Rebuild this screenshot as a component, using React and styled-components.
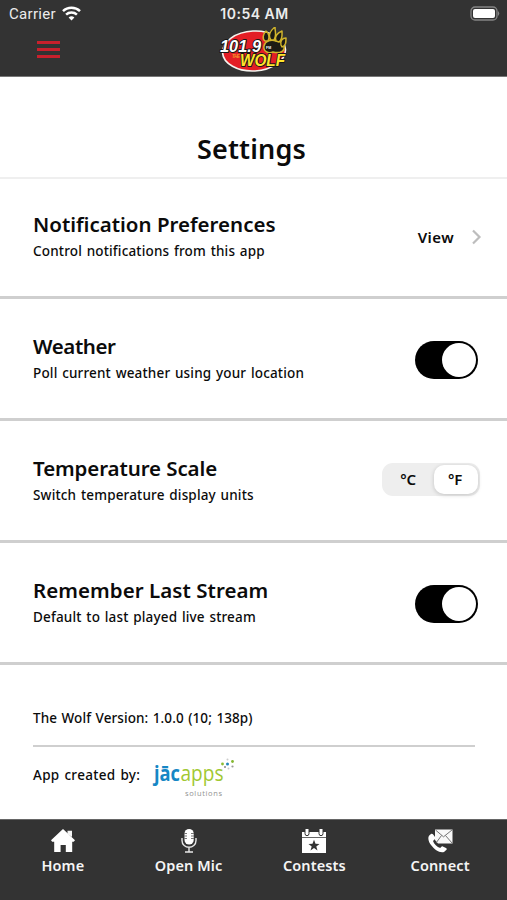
import { useState } from "react";
import styled, { createGlobalStyle } from "styled-components";

const GlobalStyle = createGlobalStyle`
  * {
    box-sizing: border-box;
  }
  body {
    margin: 0;
    background: #fff;
    color: #0b0b0b;
    font-family: "Noto Sans", "Open Sans", sans-serif;
  }
  button {
    border: 0;
    padding: 0;
    background: none;
    color: inherit;
    font-family: inherit;
  }
`;

const Screen = styled.div`
  display: flex;
  flex-direction: column;
  width: 507px;
  height: 900px;
  overflow: hidden;
`;

const Header = styled.header`
  height: 77px;
  background: #333;
  border-bottom: 1px solid #777;
`;

const StatusBar = styled.div`
  display: grid;
  grid-template-columns: 1fr auto 1fr;
  align-items: center;
  height: 27px;
  padding: 0 7px 0 9px;
  color: #ececec;
  font-family: Inter, Roboto, sans-serif;
`;

const Carrier = styled.div`
  display: flex;
  align-items: center;
  gap: 6px;
  font-family: Roboto, sans-serif;
  font-size: 15px;
  letter-spacing: 0.3px;
`;

const Clock = styled.div`
  font-weight: 600;
  font-size: 14px;
  letter-spacing: 0.5px;
`;

const Battery = styled.svg`
  justify-self: end;
`;

const NavBar = styled.div`
  display: grid;
  grid-template-columns: 1fr 76px 1fr;
  height: 49px;
  padding-left: 37px;
  padding-right: 38px;
`;

const MenuButton = styled.button`
  display: flex;
  flex-direction: column;
  gap: 4px;
  width: 23px;
  padding-top: 14px;

  span {
    width: 23px;
    height: 3px;
    background: #c9202c;
  }
`;

const Title = styled.h1`
  height: 102px;
  margin: 0;
  padding: 52px 4px 0 0;
  border-bottom: 2px solid #efefef;
  text-align: center;
  font-size: 27px;
  font-weight: 600;
  line-height: 40px;
  letter-spacing: 0.2px;
`;

const Row = styled.section`
  display: flex;
  justify-content: space-between;
  height: ${({ $first }) => ($first ? "120px" : "122px")};
  padding: ${({ $first }) => ($first ? "31px" : "33px")} 29px 0 33px;
  border-bottom: 3px solid #cfcfcf;
`;

const RowTitle = styled.h2`
  margin: 0;
  font-size: 20.5px;
  font-weight: 600;
  line-height: 28px;
  letter-spacing: ${({ $spacing }) => $spacing || 0}px;
`;

const Text = styled.p`
  margin: 0;
  font-size: 13.5px;
  font-weight: 500;
  line-height: 26px;
  letter-spacing: ${({ $spacing }) => $spacing ?? 0.17}px;
  word-spacing: 1px;
`;

const ViewLink = styled.button`
  display: flex;
  align-items: center;
  gap: 17px;
  height: 30px;
  margin-top: 12px;
  margin-right: -4px;
  font-size: 15px;
  font-weight: 600;
  letter-spacing: 0.4px;
`;

const Switch = styled.button`
  display: flex;
  justify-content: ${({ $on }) => ($on ? "flex-end" : "flex-start")};
  align-items: center;
  width: 63px;
  height: 38px;
  margin-top: 8.5px;
  padding: 0 2px;
  border-radius: 19px;
  background: #000;

  span {
    width: 34px;
    height: 34px;
    border-radius: 50%;
    background: #fff;
  }
`;

const Segmented = styled.div`
  display: flex;
  width: 98px;
  height: 33px;
  margin-top: 9px;
  margin-right: -2px;
  padding: 2px;
  border-radius: 11px;
  background: #eee;
`;

const Segment = styled.button`
  flex: ${({ $active }) => ($active ? "0 0 44px" : "1")};
  padding: 0 2px 2px 0;
  border-radius: 10px;
  background: ${({ $active }) => ($active ? "#fff" : "transparent")};
  box-shadow: ${({ $active }) => ($active ? "0 1px 4px rgba(0, 0, 0, 0.18)" : "none")};
  font-size: 15px;
  font-weight: 600;
  letter-spacing: -0.3px;
`;

const About = styled.section`
  flex: 1;
  padding: 40px 32px 0 33px;
`;

const Version = styled.div`
  height: 42px;
  border-bottom: 2px solid #cfcfcf;
`;

const Credits = styled.div`
  display: flex;
  align-items: flex-start;
  gap: 12px;
  padding-top: 11px;

  p {
    margin-top: 4px;
  }
`;

const TabBar = styled.nav`
  display: grid;
  grid-template-columns: repeat(4, 1fr);
  height: 81px;
  padding-right: 4px;
  border-top: 1px solid #666;
  background: #333;
`;

const Tab = styled.button`
  display: flex;
  flex-direction: column;
  align-items: center;
  padding-top: 8px;
  color: #f5f5f5;
  font-size: 14.5px;
  font-weight: 600;
  line-height: 22px;
  letter-spacing: 0.1px;
`;

const WifiIcon = () => (
  <svg width="19" height="15" viewBox="0 0 19 15" fill="none" stroke="#fff" strokeWidth="2.5">
    <path d="M1 5.2C5.6.7 13.4.7 18 5.2" />
    <path d="M4.1 8.6C7 5.8 12 5.8 14.9 8.6" />
    <path d="M9.5 14.5L6.6 11.4Q9.5 8.9 12.4 11.4Z" fill="#fff" stroke="none" />
  </svg>
);

const StationLogo = () => (
  <svg width="76" height="49" viewBox="0 0 76 49">
    <ellipse cx="39" cy="24" rx="31.5" ry="20" fill="#e31e25" stroke="#f5f3ee" strokeWidth="1.6" transform="rotate(-3 39 24)" />
    {/* paw print */}
    <g fill="#1c1b14" stroke="#d0b42c" strokeWidth="1.5" strokeLinejoin="round">
      <path d="M49 19C50 14 56 12 61 14C67 14 70 18 69 22C68 26 62 26 58 25C53 27 48 24 49 19Z" />
      <path d="M50 14C47 12 48 7 51 4C54 6 55 11 53 14Z" />
      <path d="M56 13C53 9 55 4 60 0C60 5 62 9 59 13Z" />
      <path d="M61 14C59 10 62 6 67 4C67 8 68 12 64 15Z" />
      <path d="M66 18C65 14 67 11 71 11C71 15 71 19 67 20Z" />
    </g>
    <g fontFamily="Liberation Sans, Arial, sans-serif" fontWeight="700" fontStyle="italic" paintOrder="stroke" strokeLinejoin="round">
      <text x="5" y="25" fontSize="17" fill="#fff" stroke="#171717" strokeWidth="2" textLength="41" lengthAdjust="spacingAndGlyphs">101.9</text>
      <text x="17" y="31" fontSize="4.5" fill="#f79b2b" textLength="8">THE</text>
      <text x="25" y="38.5" fontSize="17" fill="#ffe52b" stroke="#171717" strokeWidth="2" textLength="45" lengthAdjust="spacingAndGlyphs">WOLF</text>
    </g>
    <text x="51" y="22" fontSize="3.5" fontFamily="Liberation Sans, sans-serif" fontWeight="700" fill="#fff">FM</text>
  </svg>
);

const JacappsLogo = () => (
  <svg width="86" height="46" viewBox="0 0 86 46">
    <g fontFamily="Open Sans, Noto Sans, sans-serif">
      <text x="2" y="23" fontSize="21" fontWeight="700" fill="#1687c5" textLength="26" lengthAdjust="spacingAndGlyphs">jāc</text>
      <text x="28.5" y="23" fontSize="21" fill="#a1c832" textLength="43" lengthAdjust="spacingAndGlyphs">apps</text>
      <text x="33" y="38" fontSize="7.5" fill="#929292" textLength="37">solutions</text>
    </g>
    <circle cx="70.5" cy="6" r="1.4" fill="#8dbb30" />
    <circle cx="75.5" cy="6" r="1.5" fill="#2487b9" />
    <circle cx="80.5" cy="3.5" r="1.4" fill="#83b72f" />
    <circle cx="75.5" cy="1.4" r="1" fill="#ccc" />
    <circle cx="73" cy="9" r="1" fill="#888" />
    <circle cx="76.5" cy="10.5" r="1" fill="#ccc" />
    <circle cx="80.5" cy="8.5" r="1.1" fill="#999" />
  </svg>
);

const HomeIcon = () => (
  <svg width="26" height="26" viewBox="0 0 26 26">
    <path d="M17.5 2.8H22V9L17.5 6Z" fill="#f5f5f5" />
    <path d="M13 1L25 12.3L23.7 13.7H22.2V24H15.8V17H10.6V24H4.2V13.7H2.2L1 12.3Z" fill="#fff" />
  </svg>
);

const MicIcon = () => (
  <svg width="26" height="26" viewBox="0 0 26 26">
    <rect x="8.5" y="1" width="9.2" height="15.5" rx="4.6" fill="#fff" />
    <path d="M8 5.5H11M8 8H11M8 10.5H11M15 5.5H18M15 8H18M15 10.5H18" stroke="#777" strokeWidth="1" />
    <path d="M6 10V12.5C6 21.5 20 21.5 20 12.5V10M13 19V23.5M9 24H17" fill="none" stroke="#e8e8e8" strokeWidth="1.4" />
  </svg>
);

const ContestIcon = () => (
  <svg width="26" height="26" viewBox="0 0 26 26">
    <path d="M1 4H25V9.2H1ZM1 10H25V25H1Z" fill="#fff" />
    <path d="M4 1V5.5Q4 7.7 6 7.7Q8 7.7 8 5.5V1M18 1V5.5Q18 7.7 20 7.7Q22 7.7 22 5.5V1" fill="#fff" stroke="#333" strokeWidth="1" />
    <path d="M13 11.8L14.5 15.7L18.5 16L15.3 18.5L16.5 22.5L13 20.1L9.5 22.5L10.7 18.5L7.5 16L11.5 15.7Z" fill="#333" />
  </svg>
);

const ConnectIcon = () => (
  <svg width="26" height="26" viewBox="0 0 26 26">
    <path d="M8 1.5H25.5V15.5H11L8 12Z" fill="#f8f8f8" />
    <path d="M8.5 2L16.5 8.8L25 2M9 15L14.5 7.5M25 15L18.5 7.5" fill="none" stroke="#666" strokeWidth="0.9" />
    <path d="M4 6C0 8 1 13 4 17C8 22 12 25 17 24L19.5 21.8C20 21.2 19.8 20.6 19 20.1L15.8 18.4C14.8 18 14.2 19 13.3 20C10 19 7 16 6 13L8 11C8.5 10.4 8.3 9.8 8 9L6 6.3C5.3 5.4 4.6 5.6 4 6Z" fill="#fff" />
  </svg>
);

const tabs = [
  { label: "Home", Icon: HomeIcon },
  { label: "Open Mic", Icon: MicIcon },
  { label: "Contests", Icon: ContestIcon },
  { label: "Connect", Icon: ConnectIcon },
];

const App = () => {
  const [weather, setWeather] = useState(true);
  const [remember, setRemember] = useState(true);
  const [unit, setUnit] = useState("F");

  return (
    <Screen>
      <GlobalStyle />
      <Header>
        <StatusBar>
          <Carrier>Carrier <WifiIcon /></Carrier>
          <Clock>10:54 AM</Clock>
          <Battery width="31" height="15" viewBox="0 0 31 15">
            <rect x="2" y="1" width="26" height="13" rx="4" fill="none" stroke="#858585" strokeWidth="1.3" />
            <rect x="4" y="3" width="22" height="9" rx="2" fill="#fff" />
            <path d="M29 5Q31.5 7.5 29 10Z" fill="#858585" />
          </Battery>
        </StatusBar>
        <NavBar>
          <MenuButton aria-label="Menu"><span /><span /><span /></MenuButton>
          <StationLogo />
        </NavBar>
      </Header>

      <Title>Settings</Title>

      <Row $first>
        <div>
          <RowTitle>Notification Preferences</RowTitle>
          <Text>Control notifications from this app</Text>
        </div>
        <ViewLink>
          View
          <svg width="11" height="16" viewBox="0 0 11 16" fill="none" stroke="#bdbdbd" strokeWidth="2.2">
            <path d="M2 1.5L8.5 8L2 14.5" />
          </svg>
        </ViewLink>
      </Row>
      <Row>
        <div>
          <RowTitle $spacing={-0.4}>Weather</RowTitle>
          <Text>Poll current weather using your location</Text>
        </div>
        <Switch $on={weather} aria-label="Weather" onClick={() => setWeather(!weather)}><span /></Switch>
      </Row>
      <Row>
        <div>
          <RowTitle $spacing={-0.1}>Temperature Scale</RowTitle>
          <Text>Switch temperature display units</Text>
        </div>
        <Segmented>
          {["C", "F"].map((u) => (
            <Segment key={u} $active={unit === u} onClick={() => setUnit(u)}>°{u}</Segment>
          ))}
        </Segmented>
      </Row>
      <Row>
        <div>
          <RowTitle $spacing={0.05}>Remember Last Stream</RowTitle>
          <Text>Default to last played live stream</Text>
        </div>
        <Switch $on={remember} aria-label="Remember last stream" onClick={() => setRemember(!remember)}><span /></Switch>
      </Row>

      <About>
        <Version><Text $spacing={0.07}>The Wolf Version: 1.0.0 (10; 138p)</Text></Version>
        <Credits>
          <Text $spacing={0.33}>App created by:</Text>
          <JacappsLogo />
        </Credits>
      </About>

      <TabBar>
        {tabs.map(({ label, Icon }) => (
          <Tab key={label}>
            <Icon />
            {label}
          </Tab>
        ))}
      </TabBar>
    </Screen>
  );
};

export default App;
